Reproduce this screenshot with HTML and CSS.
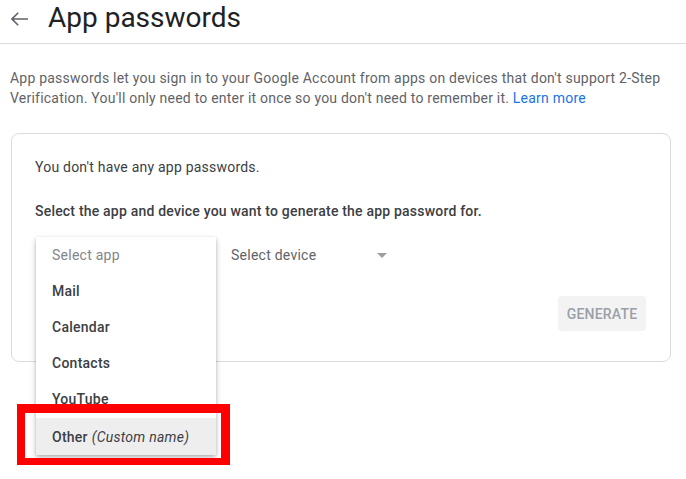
FILE: index.html
```html
<!DOCTYPE html>
<html>
<head>
<meta charset="utf-8">
<link rel="stylesheet" href="styles.css">
</head>
<body>
<header class="topbar">
  <svg class="back" width="18" height="14" viewBox="0 0 18 14" aria-hidden="true">
    <path d="M1 7H17M7.2 0.8L1 7L7.2 13.2" fill="none" stroke="#5f6368" stroke-width="1.6"/>
  </svg>
  <h1 class="title">App passwords</h1>
</header>
<p class="intro">App passwords let you sign in to your Google Account from apps on devices that don't support 2-Step Verification. You'll only need to enter it once so you don't need to remember it. <a class="link" href="#">Learn more</a></p>
<section class="card">
  <p class="empty">You don't have any app passwords.</p>
  <p class="prompt">Select the app and device you want to generate the app password for.</p>
  <div class="selects">
    <div class="app-select">
      <div class="menu">
        <div class="item placeholder">Select app</div>
        <div class="item">Mail</div>
        <div class="item">Calendar</div>
        <div class="item">Contacts</div>
        <div class="item">YouTube</div>
        <div class="item active">Other <em class="custom">(Custom name)</em></div>
        <div class="highlight"></div>
      </div>
    </div>
    <div class="device-select">
      <span class="device-label">Select device</span>
      <span class="caret"></span>
    </div>
  </div>
  <div class="actions">
    <button class="generate">GENERATE</button>
  </div>
</section>
</body>
</html>
```
FILE: styles.css
```css
* { box-sizing: border-box; }
html, body { margin: 0; padding: 0; background: #fff; }
body {
  font-family: Roboto, "Noto Sans", Arial, sans-serif;
  width: 686px;
  height: 479px;
  overflow: hidden;
}
.topbar {
  display: flex;
  align-items: flex-start;
  height: 44px;
  border-bottom: 1px solid #dadce0;
  padding-top: 2px;
}
.back {
  margin: 10px 0 0 11px;
  flex: none;
}
.title {
  margin: 0 0 0 19px;
  font-size: 28px;
  line-height: 32px;
  font-weight: 400;
  color: #202124;
  letter-spacing: 0;
}
.intro {
  margin: 24px 0 0 0;
  padding: 0 10px;
  font-size: 14px;
  line-height: 20px;
  color: #5f6368;
  letter-spacing: 0.22px;
}
.link { color: #1a73e8; text-decoration: none; }
.card {
  margin: 25px 15px 0 11px;
  height: 229px;
  border: 1px solid #dadce0;
  border-radius: 8px;
  padding: 23px 24px 0 23px;
}
.empty, .prompt {
  margin: 0;
  font-size: 14px;
  line-height: 20px;
  color: #3c4043;
  letter-spacing: 0.22px;
}
.prompt {
  margin-top: 24px;
  font-weight: 500;
  letter-spacing: 0.2px;
}
.selects {
  display: flex;
  margin-top: 16px;
  height: 36px;
}
.app-select {
  position: relative;
  width: 196px;
  height: 36px;
  flex: none;
}
.menu {
  position: absolute;
  left: 1px;
  top: 0;
  width: 180px;
  background: #fff;
  box-shadow: 0 3px 6px rgba(0,0,0,0.22), 0 1px 3px rgba(0,0,0,0.14);
  z-index: 2;
}
.item {
  height: 36px;
  padding-left: 16px;
  display: flex;
  align-items: center;
  font-size: 14px;
  font-weight: 500;
  color: #3c4043;
  letter-spacing: 0.25px;
}
.item.placeholder { color: #80868b; font-weight: 400; }
.item.active { background: #eeeeee; height: 37px; margin-top: 1px; }
.custom { font-style: italic; font-weight: 400; margin-left: 4px; color: #3c4043; }
.highlight {
  position: absolute;
  left: -19px;
  top: 167px;
  width: 213px;
  height: 61px;
  border-style: solid;
  border-color: #ff0000;
  border-width: 9px 9px 7px 8px;
}
.device-select {
  display: flex;
  align-items: center;
  width: 156px;
  height: 36px;
  justify-content: space-between;
}
.device-label {
  font-size: 14px;
  color: #5f6368;
  letter-spacing: 0.25px;
}
.caret {
  width: 0;
  height: 0;
  border-left: 5px solid transparent;
  border-right: 5px solid transparent;
  border-top: 5px solid #9e9e9e;
  margin-top: 1px;
}
.actions {
  display: flex;
  justify-content: flex-end;
  margin-top: 23px;
}
.generate {
  height: 35px;
  width: 88px;
  padding: 0;
  border: none;
  border-radius: 4px;
  background: #f3f3f3;
  color: #9aa0a6;
  font-family: Roboto, Arial, sans-serif;
  font-size: 14px;
  font-weight: 500;
  letter-spacing: 0.2px;
}
```
